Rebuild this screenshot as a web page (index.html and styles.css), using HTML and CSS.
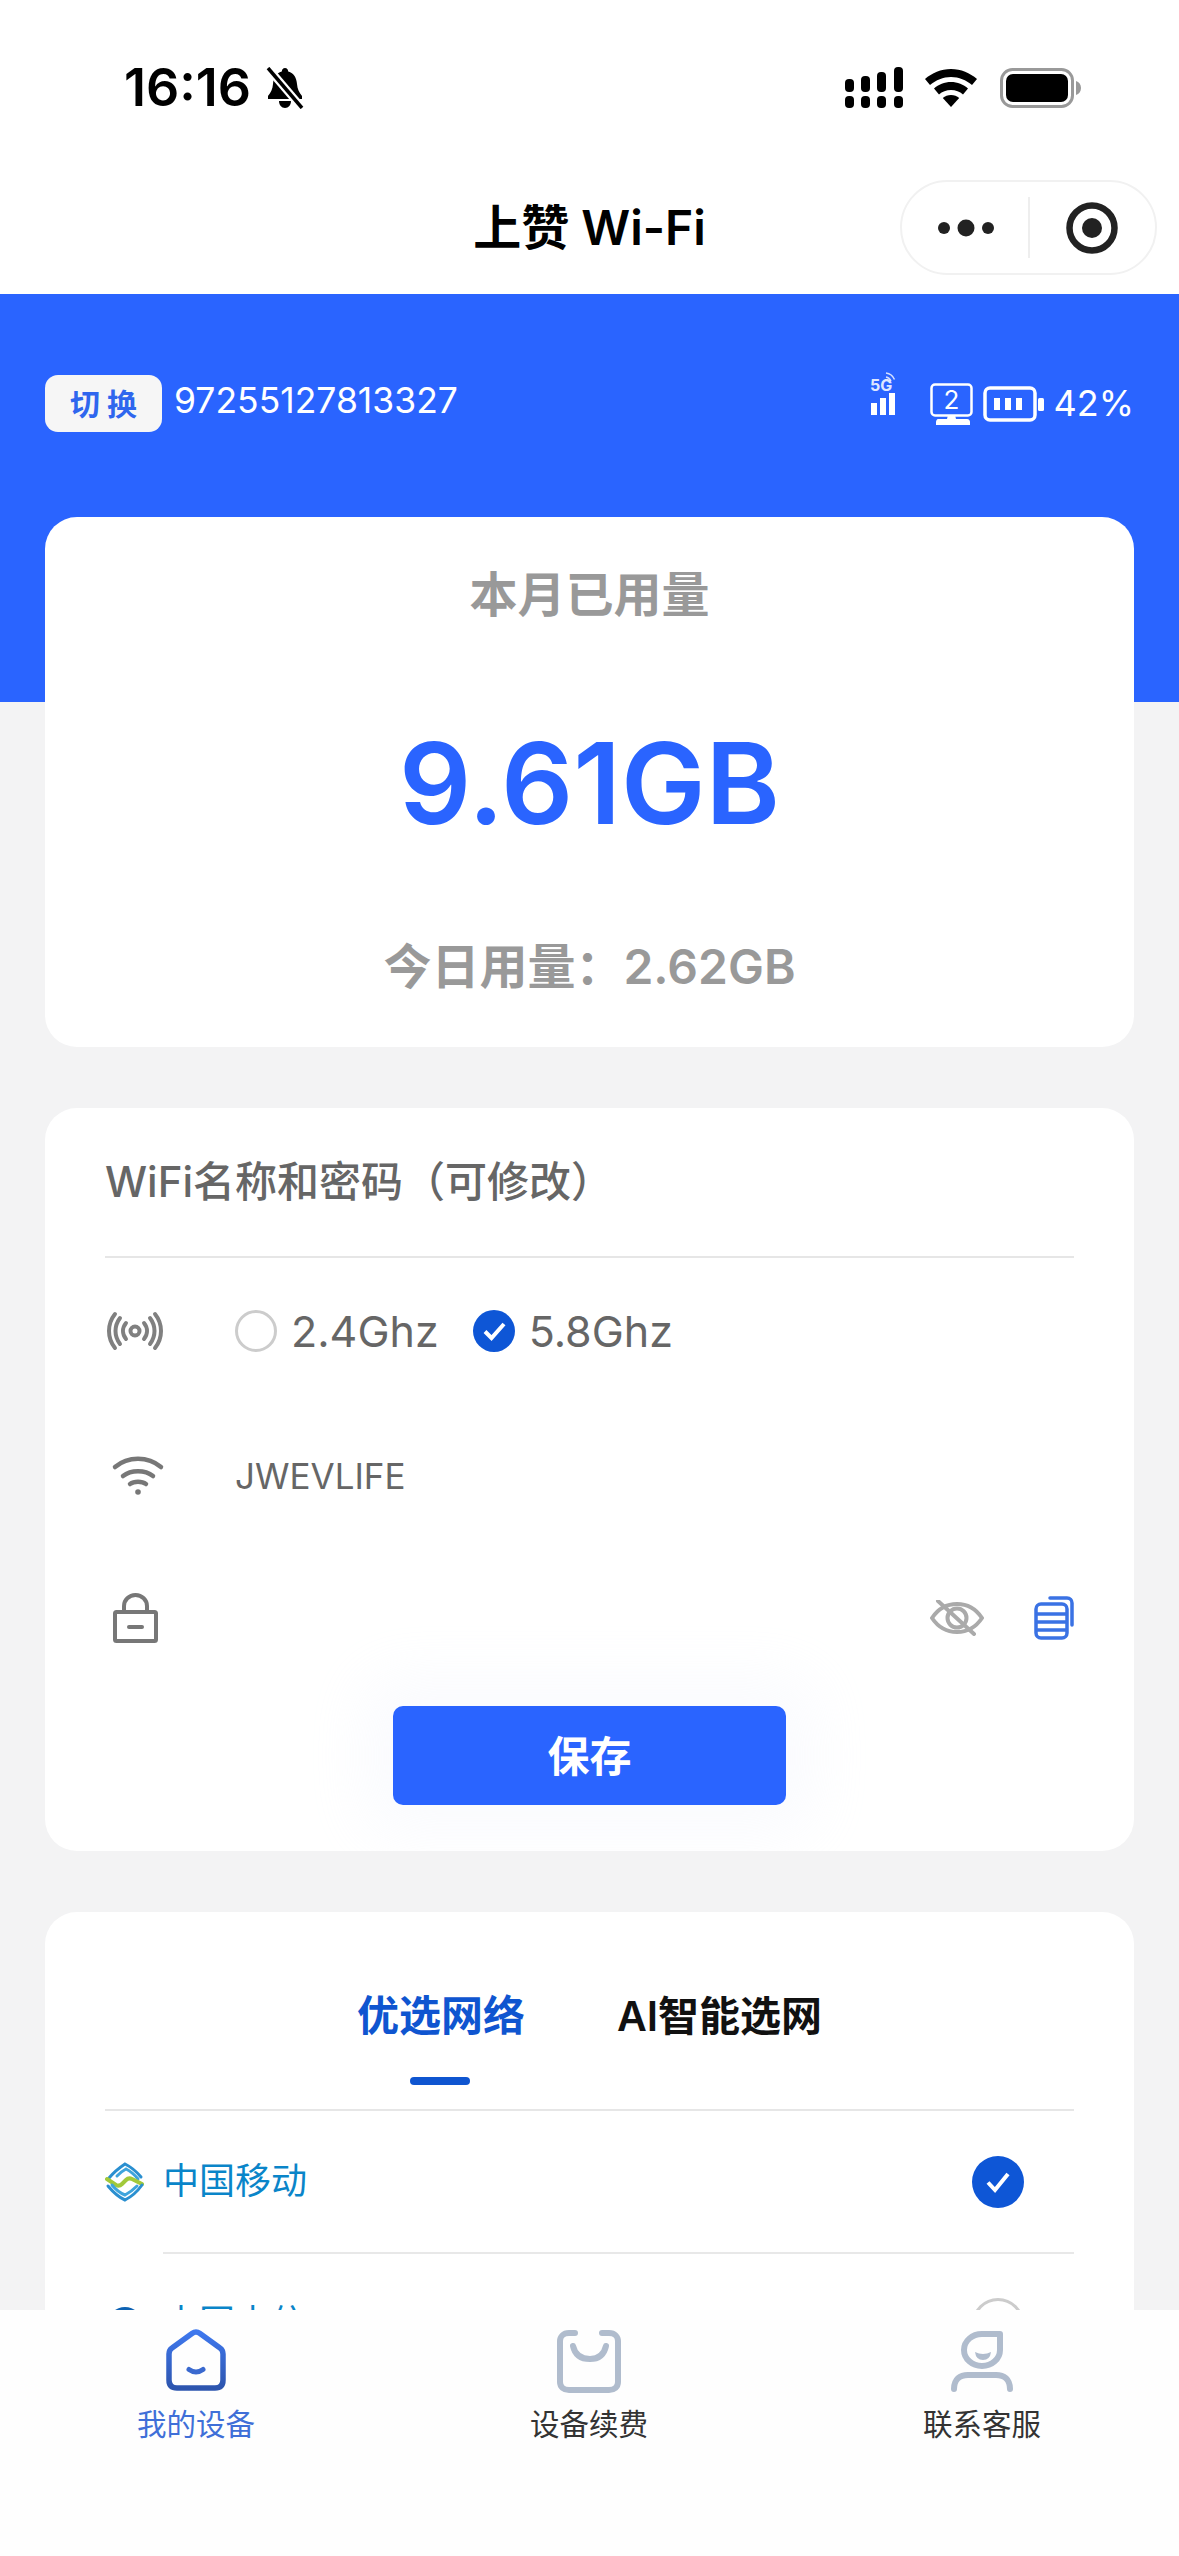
FILE: index.html
```html
<!DOCTYPE html>
<html lang="zh-CN">
<head>
    <meta charset="UTF-8">
    <meta name="viewport" content="width=device-width, initial-scale=1.0">
    <title>上赞 Wi-Fi</title>
    <link rel="stylesheet" href="styles.css">
</head>
<body>
<div class="page">

    <!-- Status bar -->
    <div class="statusbar">
        <div class="status-left">
            <span class="clock">16:16</span>
            <svg class="bell" width="40" height="42" viewBox="0 0 40 42">
                <path d="M20 1c2 0 3 1.500 3.200 3.500C29 6 31.500 11 32 17c.4 5 2 8.500 5 12v3H3v-3c3-3.500 4.600-7 5-12 .5-6 3-11 8.800-12.500C17 2.500 18 1 20 1z" fill="#000"/>
                <path d="M14 34h12c0 4-2.500 7-6 7s-6-3-6-7z" fill="#000"/>
                <path d="M3 1l34 40" stroke="#fff" stroke-width="8"/>
                <path d="M3 1l34 40" stroke="#000" stroke-width="3.500"/>
            </svg>
        </div>
        <div class="status-right">
            <svg width="58" height="41" viewBox="0 0 58 41" fill="#000">
                <rect x="0" y="12" width="9" height="13" rx="4"/><rect x="16" y="9" width="9" height="16" rx="4"/><rect x="32" y="5" width="9" height="20" rx="4"/><rect x="49" y="0" width="9" height="25" rx="4"/>
                <rect x="0" y="29" width="9" height="12" rx="4"/><rect x="16" y="29" width="9" height="12" rx="4"/><rect x="32" y="29" width="9" height="12" rx="4"/><rect x="49" y="29" width="9" height="12" rx="4"/>
            </svg>
            <svg class="status-wifi" width="52" height="38" viewBox="0 0 52 38" fill="#000">
                <path d="M26 0c10 0 19 4 26 10l-5 6C41 11 34 8 26 8S11 11 5 16l-5-6C7 4 16 0 26 0z"/>
                <path d="M26 13c6.500 0 12.500 2.500 17 6.500l-5 6c-3.200-2.800-7.400-4.500-12-4.500s-8.800 1.700-12 4.500l-5-6C13.500 15.500 19.500 13 26 13z"/>
                <path d="M26 26c3.200 0 6 1.100 8.200 3L26 38l-8.200-9c2.200-1.900 5-3 8.200-3z"/>
            </svg>
            <svg class="status-battery" width="82" height="40" viewBox="0 0 82 40">
                <rect x="1.500" y="1.500" width="71" height="37" rx="11" fill="none" stroke="#999" stroke-width="3"/>
                <rect x="6" y="6" width="62" height="28" rx="7" fill="#000"/>
                <path d="M76 13c3 1 5 3.500 5 7s-2 6-5 7z" fill="#999"/>
            </svg>
        </div>
    </div>

    <!-- Title bar -->
    <div class="titlebar">
        <span></span>
        <h1 class="app-title">上赞 Wi-Fi</h1>
        <div class="capsule">
            <svg width="56" height="18" viewBox="0 0 56 18" fill="#222">
                <circle cx="6" cy="9" r="6"/><circle cx="28" cy="9" r="8.500"/><circle cx="50" cy="9" r="6"/>
            </svg>
            <span class="capsule-line"></span>
            <svg width="52" height="52" viewBox="0 0 52 52">
                <circle cx="26" cy="26" r="22.500" fill="none" stroke="#222" stroke-width="6.500"/>
                <circle cx="26" cy="26" r="10" fill="#222"/>
            </svg>
        </div>
    </div>

    <!-- Blue header -->
    <div class="hero">
        <button class="switch-btn">切 换</button>
        <span class="device-no">97255127813327</span>
        <div class="hero-right">
            <svg class="icon-5g" width="26" height="44" viewBox="0 0 26 44" fill="#fff">
                <text x="0" y="19" class="icon-5g-text">5G</text>
                <path d="M16 1c4 .5 7 3 8.500 6.500M16 5c2.500 .5 4 1.800 5 4" stroke="#fff" stroke-width="1.500" fill="none" opacity=".8"/>
                <rect x="1" y="31" width="6" height="12"/><rect x="10" y="26" width="6" height="17"/><rect x="19" y="21" width="6" height="22"/>
            </svg>
            <svg class="icon-monitor" width="43" height="42" viewBox="0 0 43 42">
                <rect x="1.500" y="1.500" width="40" height="31" rx="3.500" fill="none" stroke="#fff" stroke-width="2.500"/>
                <path d="M18 32h7l1 4h11c2 0 3 1.500 3 3v3H6v-3c0-1.500 1-3 2-3h9z" fill="#fff"/>
                <text x="21.500" y="26" class="icon-monitor-text">2</text>
            </svg>
            <svg class="icon-battery" width="61" height="36" viewBox="0 0 61 36">
                <rect x="2" y="2" width="50" height="32" rx="5" fill="none" stroke="#fff" stroke-width="3.500"/>
                <rect x="11" y="12" width="6" height="12" fill="#fff"/><rect x="22" y="12" width="6" height="12" fill="#fff"/><rect x="33" y="12" width="6" height="12" fill="#fff"/>
                <rect x="55" y="12" width="6" height="13" rx="1.500" fill="#fff"/>
            </svg>
            <span class="battery-pct">42%</span>
        </div>
    </div>

    <!-- Cards -->
    <div class="content">
        <div class="card usage-card">
            <div class="usage-title">本月已用量</div>
            <div class="usage-value">9.61GB</div>
            <div class="usage-today">今日用量：2.62GB</div>
        </div>

        <div class="card wifi-card">
            <div class="wifi-title">WiFi名称和密码（可修改）</div>
            <div class="wifi-row wifi-row-band">
                <svg class="row-icon" width="60" height="42" viewBox="0 0 60 42" fill="none" stroke="#808080" stroke-width="4" stroke-linecap="round">
                    <circle cx="30" cy="21" r="4.500"/>
                    <path d="M21 13c-4 5-4 11 0 16M39 13c4 5 4 11 0 16"/>
                    <path d="M15 8c-6 8-6 18 0 26M45 8c6 8 6 18 0 26"/>
                    <path d="M10 4c-8 10-8 24 0 34M50 4c8 10 8 24 0 34"/>
                </svg>
                <span class="radio"></span>
                <span class="band-label">2.4Ghz</span>
                <span class="radio radio-on">
                    <svg width="42" height="42" viewBox="0 0 42 42"><path d="M12 21.500l6.500 6.500L31 14" fill="none" stroke="#fff" stroke-width="4"/></svg>
                </span>
                <span class="band-label">5.8Ghz</span>
            </div>
            <div class="wifi-row wifi-row-name">
                <svg class="row-icon" width="60" height="40" viewBox="0 0 60 40" fill="none" stroke="#777" stroke-width="4.500" stroke-linecap="round">
                    <path d="M10 11c13-11 33-11 46 0"/>
                    <path d="M18 20c8-6.500 22-6.500 30 0"/>
                    <path d="M25 28c4-3 12-3 16 0"/>
                    <circle cx="33" cy="36" r="2.800" fill="#777" stroke="none"/>
                </svg>
                <span class="ssid">JWEVLIFE</span>
            </div>
            <div class="wifi-row wifi-row-pass">
                <svg class="row-icon" width="60" height="50" viewBox="0 0 60 50" fill="none" stroke="#777" stroke-width="4">
                    <rect x="10" y="19" width="41" height="29" rx="1.500"/>
                    <path d="M19 19v-6c0-6 5-11 11.500-11S42 7 42 13v6"/>
                    <path d="M24 34h13" stroke-linecap="round"/>
                </svg>
                <span class="pass-space"></span>
                <svg width="54" height="36" viewBox="0 0 54 36" fill="none" stroke="#aaa" stroke-width="4">
                    <path d="M2 18C8 9 17 4 27 4s19 5 25 14c-6 9-15 14-25 14S8 27 2 18z"/>
                    <circle cx="27" cy="18" r="9.500"/>
                    <path d="M8 1l36 33" stroke-linecap="round"/>
                </svg>
                <svg class="copy-icon" width="40" height="44" viewBox="0 0 40 44" fill="none" stroke="#3a72e4" stroke-width="3.500" stroke-linecap="round">
                    <rect x="2" y="8" width="31" height="34" rx="5"/>
                    <path d="M3 18h29M3 26h29M3 34h29"/>
                    <path d="M16 2h17c3 0 5 2 5 5v22"/>
                </svg>
            </div>
            <button class="save-btn">保存</button>
        </div>

        <div class="card network-card">
            <div class="tabs">
                <div class="tab tab-active">优选网络</div>
                <div class="tab">AI智能选网</div>
            </div>
            <div class="net-row">
                <svg class="net-logo" width="40" height="40" viewBox="0 0 40 40" fill="none" stroke-linecap="round">
                    <path d="M4 16C9 10 14 6 20 2c6 3 11 7 16 13" stroke="#2a8fd0" stroke-width="3"/>
                    <path d="M12 14c3-3 5-5 9-7 4 2 8 5 12 10" stroke="#3ea4dc" stroke-width="3"/>
                    <path d="M2 17l9 6c2 1 4 1 6-1l4-4c2-2 4-2 6-1l10 5" stroke="#a2c93a" stroke-width="4"/>
                    <path d="M7 23c4 5 8 8 13 10 4-2 8-5 12-9" stroke="#3ea4dc" stroke-width="3"/>
                    <path d="M3 24c5 6 10 11 17 14 6-3 12-8 17-15" stroke="#2a8fd0" stroke-width="3"/>
                </svg>
                <span class="net-name">中国移动</span>
                <span class="radio radio-on radio-net">
                    <svg width="52" height="52" viewBox="0 0 52 52"><path d="M16 26.500l7 7.500L36 18" fill="none" stroke="#fff" stroke-width="4"/></svg>
                </span>
            </div>
            <div class="net-row">
                <svg class="net-logo" width="40" height="40" viewBox="0 0 40 40"><circle cx="20" cy="20" r="17" fill="#0d62b3"/></svg>
                <span class="net-name">中国电信</span>
                <span class="radio radio-net"></span>
            </div>
        </div>
    </div>

    <!-- Bottom tabs -->
    <div class="tabbar">
        <div class="tabbar-item tabbar-active">
            <svg width="60" height="64" viewBox="0 0 60 64" fill="none">
                <defs>
                    <linearGradient id="homeGrad" x1="0" y1="0" x2="0" y2="1">
                        <stop offset="0" stop-color="#3f78ee"/>
                        <stop offset="1" stop-color="#2d55ae"/>
                    </linearGradient>
                </defs>
                <path d="M26 4.500L6 19q-3 2-3 6v26q0 8 8 8h38q8 0 8-8V25q0-4-3-6L34 4.500q-4-3-8 0z" stroke="url(#homeGrad)" stroke-width="5.500" stroke-linejoin="round"/>
                <path d="M23 40.500q7 5 14 0" stroke="#3a69cf" stroke-width="5" stroke-linecap="round"/>
            </svg>
            <span>我的设备</span>
        </div>
        <div class="tabbar-item">
            <svg width="64" height="64" viewBox="0 0 64 64" fill="none" stroke="#b0bccd" stroke-width="6" stroke-linecap="round">
                <path d="M18 4h-6C6 4 3 8 3 12v41c0 5 4 8 9 8h40c5 0 9-3 9-8V12c0-4-3-8-9-8h-7"/>
                <path d="M16 17c2 9 8 13 17 13s14-4 16-13"/>
            </svg>
            <span>设备续费</span>
        </div>
        <div class="tabbar-item">
            <svg width="64" height="64" viewBox="0 0 64 64" fill="none" stroke="#b0bccd" stroke-width="6">
                <path d="M32 5h18v16a18 16 0 0 1-36 0c0-9 8-16 18-16z" stroke-linejoin="round"/>
                <path d="M25 23q8 4 16 0q-1 8-8 8t-8-8z" fill="#b0bccd" stroke="none"/>
                <path d="M4 60c0-10 6-14 14-14h28c8 0 14 4 14 14" stroke-linecap="round"/>
            </svg>
            <span>联系客服</span>
        </div>
    </div>

</div>
</body>
</html>
```

FILE: styles.css
```css
html, body {
    margin: 0;
    padding: 0;
}
body {
    font-family: Inter, "Noto Sans CJK SC", sans-serif;
    background-color: #f3f3f4;
}
.page {
    position: relative;
    width: 1179px;
    height: 2556px;
    overflow: hidden;
    background-color: #f3f3f4;
}

/* status bar */
.statusbar {
    display: flex;
    justify-content: space-between;
    align-items: flex-start;
    height: 180px;
    padding: 0 97px 0 124px;
    box-sizing: border-box;
    background-color: #fff;
}
.status-left {
    display: flex;
    align-items: center;
    margin-top: 58px;
}
.clock {
    font-size: 52px;
    line-height: 60px;
    font-weight: 600;
    color: #000;
}
.bell {
    margin-left: 14px;
}
.status-right {
    display: flex;
    align-items: center;
    margin-top: 67px;
}
.status-wifi {
    margin-left: 22px;
}
.status-battery {
    margin-left: 23px;
}

/* title bar */
.titlebar {
    display: grid;
    grid-template-columns: 1fr auto 1fr;
    align-items: start;
    height: 114px;
    background-color: #fff;
}
.app-title {
    margin: 16px 0 0;
    font-size: 48px;
    line-height: 64px;
    font-weight: 600;
    color: #000;
}
.capsule {
    display: flex;
    align-items: center;
    justify-self: end;
    width: 257px;
    height: 95px;
    margin-right: 22px;
    padding-left: 36px;
    box-sizing: border-box;
    border: 2px solid #f1f1f1;
    border-radius: 48px;
    background-color: #fff;
}
.capsule-line {
    width: 2px;
    height: 61px;
    margin: 0 36px 0 34px;
    background-color: #eee;
}

/* blue header */
.hero {
    display: flex;
    align-items: flex-start;
    height: 408px;
    padding: 81px 45px 0;
    box-sizing: border-box;
    background-color: #2a64ff;
}
.switch-btn {
    width: 117px;
    height: 57px;
    padding: 0 0 3px;
    border: none;
    border-radius: 13px;
    background-color: #f6f6f6;
    color: #2f66ee;
    font-family: inherit;
    font-size: 30px;
    font-weight: 700;
}
.device-no {
    margin-left: 12px;
    font-size: 35.500px;
    line-height: 52px;
    color: #fff;
}
.hero-right {
    display: flex;
    align-items: flex-start;
    margin-left: auto;
    margin-top: -3px;
}
.icon-5g-text {
    font-size: 16px;
    font-weight: 700;
    fill: #fff;
    opacity: .85;
}
.icon-monitor {
    margin-left: 34px;
    margin-top: 11px;
}
.icon-monitor-text {
    font-size: 26px;
    text-anchor: middle;
    fill: #fff;
}
.icon-battery {
    margin-left: 10px;
    margin-top: 14px;
}
.battery-pct {
    margin-left: 9px;
    margin-top: 8px;
    font-size: 36px;
    line-height: 46px;
    color: #fff;
}

/* cards */
.content {
    display: flex;
    flex-direction: column;
    gap: 61px;
    margin-top: -185px;
    padding: 0 45px;
}
.card {
    border-radius: 32px;
    background-color: #fff;
}
.usage-card {
    height: 530px;
    text-align: center;
}
.usage-title {
    padding-top: 45px;
    font-size: 48px;
    line-height: 66px;
    font-weight: 600;
    color: #999;
}
.usage-value {
    margin-top: 90px;
    font-size: 113px;
    line-height: 130px;
    font-weight: 600;
    color: #2a64ff;
}
.usage-today {
    margin-top: 86px;
    font-size: 48px;
    line-height: 66px;
    font-weight: 600;
    color: #999;
}

.wifi-card {
    height: 743px;
    padding: 0 60px;
    box-sizing: border-box;
    overflow: hidden;
}
.wifi-title {
    height: 150px;
    padding-top: 43px;
    box-sizing: border-box;
    border-bottom: 2px solid #e6e6e6;
    font-size: 42px;
    line-height: 62px;
    font-weight: 500;
    color: #666;
}
.wifi-row {
    display: flex;
    align-items: center;
}
.row-icon {
    flex: none;
    margin-right: 70px;
}
.wifi-row-band {
    height: 60px;
    margin-top: 43px;
}
.radio {
    display: block;
    flex: none;
    width: 42px;
    height: 42px;
    border: 3px solid #ccc;
    border-radius: 50%;
    box-sizing: border-box;
}
.radio-on {
    border: none;
    background-color: #0e56d6;
}
.radio svg {
    display: block;
}
.band-label {
    margin: 0 34px 0 14px;
    font-size: 43px;
    line-height: 60px;
    color: #666;
}
.wifi-row-name {
    height: 50px;
    margin-top: 90px;
}
.ssid {
    font-size: 35px;
    line-height: 50px;
    color: #666;
}
.wifi-row-pass {
    height: 50px;
    margin-top: 92px;
}
.pass-space {
    flex: 1;
}
.copy-icon {
    margin-left: 50px;
}
.save-btn {
    display: block;
    width: 393px;
    height: 99px;
    margin: 63px auto 0;
    padding: 0 0 4px;
    border: none;
    border-radius: 10px;
    background-color: #2a64ff;
    color: #fff;
    font-family: inherit;
    font-size: 42px;
    font-weight: 600;
    box-shadow: 0 0 60px 30px rgba(230, 236, 250, .2);
}

.network-card {
    height: 700px;
    padding: 0 60px;
    box-sizing: border-box;
}
.tabs {
    display: flex;
    justify-content: center;
    gap: 92px;
    height: 199px;
    box-sizing: border-box;
    padding-top: 74px;
    border-bottom: 2px solid #e6e6e6;
}
.tab {
    position: relative;
    font-size: 41px;
    line-height: 60px;
    font-weight: 600;
    color: #111;
}
.tab-active {
    color: #0f55d0;
    font-size: 42px;
}
.tab-active::after {
    content: "";
    position: absolute;
    left: 53px;
    bottom: 24px;
    width: 60px;
    height: 8px;
    border-radius: 4px;
    background-color: #0f55d0;
}
.net-row {
    position: relative;
    display: flex;
    align-items: center;
    height: 142px;
}
.net-logo {
    flex: none;
}
.net-name {
    margin-left: 18px;
    margin-bottom: 9px;
    font-size: 36px;
    color: #0a85c9;
}
.radio-net {
    width: 52px;
    height: 52px;
    margin-left: auto;
    margin-right: 50px;
}
.net-row + .net-row::before {
    content: "";
    position: absolute;
    top: -1px;
    left: 58px;
    right: 0;
    height: 2px;
    background-color: #e8e8e8;
}

/* bottom tabs */
.tabbar {
    position: absolute;
    left: 0;
    right: 0;
    bottom: 0;
    display: flex;
    height: 246px;
    padding: 19px 78px 0 77px;
    box-sizing: border-box;
    justify-content: space-between;
    background-color: #fefefe;
}
.tabbar-item {
    display: flex;
    flex-direction: column;
    align-items: center;
    width: 238px;
    font-size: 29.500px;
    line-height: 40px;
    color: #333;
}
.tabbar-item span {
    margin-top: 11px;
}
.tabbar-active {
    color: #3f6fd8;
}
```
